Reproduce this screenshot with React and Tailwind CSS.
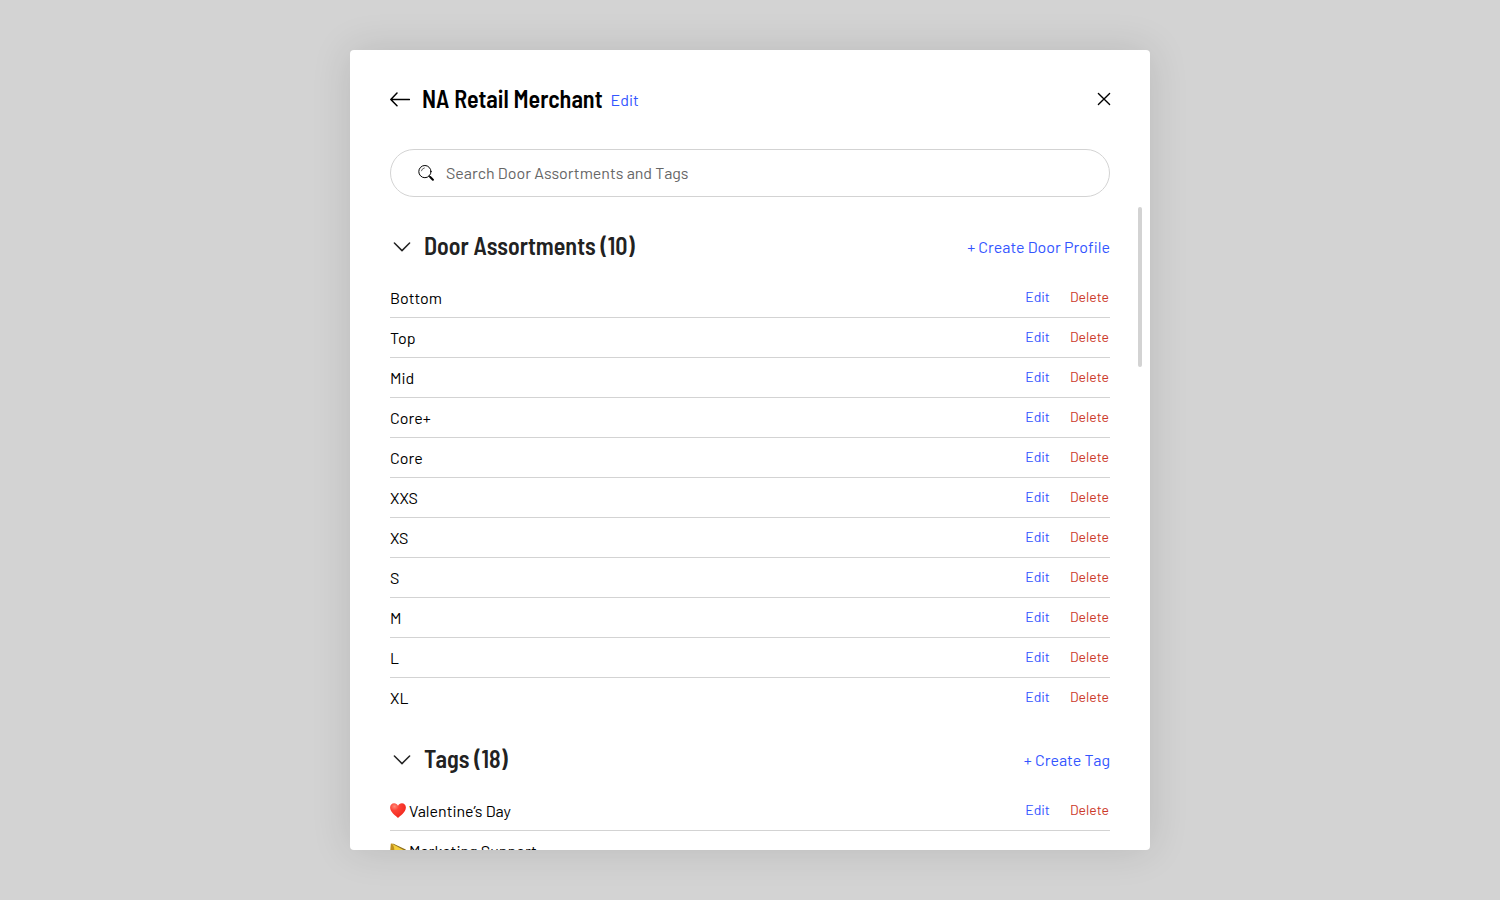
import { useState } from "react";

const doorAssortments = ["Bottom", "Top", "Mid", "Core+", "Core", "XXS", "XS", "S", "M", "L", "XL"];

const tags = [
  { name: "Valentine’s Day", icon: HeartIcon },
  { name: "Marketing Support", icon: MegaphoneIcon, locked: true },
];

function ArrowLeftIcon() {
  return (
    <svg className="h-5 w-5" viewBox="0 0 20 20" fill="none" stroke="currentColor" strokeWidth="1.5" strokeLinecap="round" strokeLinejoin="round" aria-hidden="true">
      <path d="M19.4 10.4H0.8M7 4L0.8 10.4L7 16.8" />
    </svg>
  );
}

function CloseIcon() {
  return (
    <svg className="h-3 w-3" viewBox="0 0 12 12" fill="none" stroke="currentColor" strokeWidth="1.35" strokeLinecap="round" overflow="visible" aria-hidden="true">
      <path d="M0.4 0.4L11.6 11.6M11.6 0.4L0.4 11.6" />
    </svg>
  );
}

function SearchIcon() {
  return (
    <svg className="h-4 w-4 shrink-0" viewBox="0 0 16 16" fill="none" stroke="currentColor" strokeLinecap="round" aria-hidden="true">
      <circle cx="6.9" cy="6.6" r="6.1" strokeWidth="1" />
      <path d="M3.4 5.8A3.8 3.8 0 0 1 6.4 2.9" strokeWidth="0.6" />
      <path d="M11.3 11L12.4 12.1" strokeWidth="1" />
      <path d="M12.2 12L14.9 14.7" strokeWidth="2" />
    </svg>
  );
}

function ChevronDownIcon() {
  return (
    <svg className="h-6 w-6" viewBox="0 0 24 24" fill="none" stroke="currentColor" strokeWidth="1.5" strokeLinecap="round" strokeLinejoin="round" aria-hidden="true">
      <path d="M4.4 9L12 16.6L19.6 9" />
    </svg>
  );
}

function HeartIcon() {
  return (
    <svg className="h-4 w-4 shrink-0" viewBox="0 0 16 16" aria-hidden="true">
      <defs>
        <radialGradient id="heart" cx="0.28" cy="0.22" r="0.8">
          <stop offset="0" stopColor="#ff8a78" />
          <stop offset="0.35" stopColor="#fd4236" />
          <stop offset="1" stopColor="#f0281e" />
        </radialGradient>
      </defs>
      <path d="M8 15C6.4 13 0.1 9.4 0.1 4.4C0.1 1.9 1.9 0.2 4.1 0.2C5.9 0.2 7.3 1.2 8 2.8C8.7 1.2 10.1 0.2 11.9 0.2C14.1 0.2 15.9 1.9 15.9 4.4C15.9 9.4 9.6 13 8 15Z" fill="url(#heart)" />
    </svg>
  );
}

function MegaphoneIcon() {
  return (
    <svg className="h-4 w-4 shrink-0" viewBox="0 0 16 16" aria-hidden="true">
      <path d="M2.4 0.6L15.8 7.6L1.2 14.6Z" fill="#f4cf3c" />
      <path d="M2.4 0.2L15.8 6.4L15.4 8L3.4 1.6Z" fill="#8f6f1c" />
      <path d="M0.8 0.8C2 0 3 1.4 4 4.4C4.8 8 4 13 2.4 14.8C1 15.6 0.2 12 0.2 8Z" fill="#c0901e" />
    </svg>
  );
}

function Section({ title, createLabel, children }) {
  const [open, setOpen] = useState(true);

  return (
    <section className="mb-[26px]">
      <div className="mb-[15px] flex h-8 items-center justify-between">
        <h2 className="pb-0.5 font-['Barlow_Semi_Condensed','Barlow',sans-serif] text-2xl font-semibold text-[#222]">
          <button type="button" aria-expanded={open} onClick={() => setOpen(!open)} className="flex items-center gap-[10px]">
            <ChevronDownIcon />
            {title}
          </button>
        </h2>
        <button type="button" className="text-[#3355ff]">{createLabel}</button>
      </div>
      {open && <ul className="divide-y divide-[#d3d3d3]">{children}</ul>}
    </section>
  );
}

function Row({ name, icon: Icon, locked }) {
  return (
    <li className="flex h-10 items-center justify-between">
      <span className="flex items-center gap-[3px]">
        {Icon && <Icon />}
        {name}
      </span>
      {!locked && (
        <span className="flex gap-5 pr-px pb-0.5 text-sm">
          <button type="button" className="text-[#3355ff]">Edit</button>
          <button type="button" className="text-[#cc3929]">Delete</button>
        </span>
      )}
    </li>
  );
}

export default function App() {
  const [query, setQuery] = useState("");
  const matches = (name) => name.toLowerCase().includes(query.toLowerCase());

  return (
    <div className="flex h-screen justify-center bg-[#d3d3d3] py-[50px] font-['Barlow','Roboto',sans-serif] text-base text-black">
      <div role="dialog" aria-labelledby="title" className="relative flex w-full max-w-[800px] flex-col overflow-hidden rounded bg-white shadow-[0_0_40px_rgba(0,0,0,0.12)]">
        <header className="mb-px flex h-[98px] shrink-0 items-center justify-between px-10">
          <div className="flex items-center">
            <button type="button" aria-label="Back" className="mr-3">
              <ArrowLeftIcon />
            </button>
            <h1 id="title" className="mr-2 font-['Barlow_Semi_Condensed','Barlow',sans-serif] text-2xl font-semibold">NA Retail Merchant</h1>
            <button type="button" className="pt-0.5 text-[#3355ff]">Edit</button>
          </div>
          <button type="button" aria-label="Close">
            <CloseIcon />
          </button>
        </header>

        <label className="mx-10 flex h-12 shrink-0 items-center gap-3 rounded-full border border-[#d3d3d3] px-[27px]">
          <SearchIcon />
          <input
            type="search"
            aria-label="Search"
            value={query}
            onChange={(e) => setQuery(e.target.value)}
            placeholder="Search Door Assortments and Tags"
            className="w-full outline-none placeholder:text-[#666]"
          />
        </label>

        <div className="mt-[10px] min-h-0 flex-1 overflow-y-auto px-10 pt-6 [scrollbar-width:none]">
          <Section title="Door Assortments (10)" createLabel="+ Create Door Profile">
            {doorAssortments.filter(matches).map((name) => (
              <Row key={name} name={name} />
            ))}
          </Section>
          <Section title="Tags (18)" createLabel="+ Create Tag">
            {tags.filter((tag) => matches(tag.name)).map((tag) => (
              <Row key={tag.name} {...tag} />
            ))}
          </Section>
        </div>

        <div className="absolute top-[157px] right-2 h-40 w-1 rounded-full bg-[#d3d3d3]" />
      </div>
    </div>
  );
}
